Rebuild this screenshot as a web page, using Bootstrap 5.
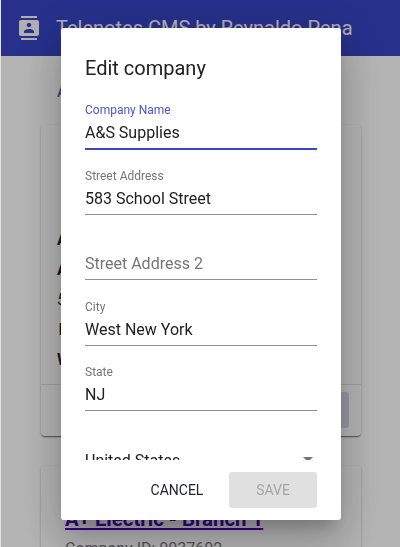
<!DOCTYPE html>
<html lang="en">
<head>
<meta charset="utf-8">
<meta name="viewport" content="width=device-width, initial-scale=1">
<title>Telenotes CMS</title>
<link href="https://cdn.jsdelivr.net/npm/bootstrap@5.3.0/dist/css/bootstrap.min.css" rel="stylesheet">
<style>
  html, body { height: 100%; }
  body { font-family: Roboto, sans-serif; color: #212121; background: #e2e2e2; line-height: 1.5; }
  .app-shell { margin-left: 1px; height: 547px; background: #fafafa; }
  .app-bar { height: 56px; padding: 0 16px; background: #3643c0; color: #f4f4f4; gap: 15px; }
  .app-title { font-size: 20px; line-height: 32px; }
  .app-main { padding: 0 39px 0 40px; }
  .crumb { height: 69px; padding: 24px 0 0 16px; color: #3643c0; }
  .company-card { border-radius: 4px; background: #fafafa;
    box-shadow: 0 2px 1px -1px rgba(0,0,0,.3), 0 1px 1px rgba(0,0,0,.2), 0 1px 3px rgba(0,0,0,.2); }
  .card-main { height: 311px; }
  .company-info { padding: 100px 0 0 16px; line-height: 30px; height: 259px; }
  .info-code { padding-left: 1.500px; }
  .card-foot { height: 52px; border-top: 1px solid #dedede; padding: 7px 12px; }
  .ghost-btn { width: 88px; height: 36px; background: #d3d4e8; border-radius: 3px; }
  .card-next { margin-top: 30px; padding: 38px 24px 0; height: 120px; }
  .next-name { font-size: 20.400px; line-height: 30px; color: #4b00c4; text-decoration-thickness: 2px; }
  .next-id { color: #777; line-height: 30px; }
  .modal-backdrop.dim { left: 1px; width: 399px; height: 547px; opacity: .28; }
  .edit-dialog { width: 280px; margin: 28px 0 0 61px; }
  .edit-content { height: 492px; border: 0; border-radius: 3px; color: #212121;
    box-shadow: 0 11px 15px -7px rgba(0,0,0,.2), 0 24px 38px 3px rgba(0,0,0,.14), 0 9px 46px 8px rgba(0,0,0,.12); }
  .edit-title { font-size: 20px; line-height: 32px; }
  .edit-header { padding: 24px 24px 0; height: 66px; border: 0; }
  .edit-body { height: 366px; padding: 0 24px; overflow: hidden; flex: none; }
  .field { height: 65px; padding-top: 8px; }
  .field-tall { height: 66px; padding-top: 9px; }
  .field-box { height: 48px; border-bottom: 1px solid #8e8e8e; }
  .field-box label { font-size: 12px; line-height: 18px; color: #757575; height: 18px; }
  .field-box input { border: 0; outline: 0; padding: 0; background: none; color: #212121; font-size: 16px; height: 26px; }
  .field-box input::placeholder { color: #757575; opacity: 1; }
  .field-active .field-box { border-bottom: 2px solid #3748bc; }
  .field-active label { color: #4655cc; line-height: 16px; height: 17px; }
  .field-country { padding-top: 11px; }
  .edit-footer { height: 60px; padding: 12px 24px; border: 0; gap: 9.600px; }
  .act { height: 36px; padding: 0 16px; font-size: 14px; border: 0; border-radius: 3px; }
  .act-save { width: 88px; background: #e0e0e0; color: #a6a6a6; }
</style>
<script src="https://cdn.jsdelivr.net/npm/bootstrap@5.3.0/dist/js/bootstrap.bundle.min.js"></script>
</head>
<body class="overflow-hidden">
<div class="app-shell overflow-hidden">
  <header class="app-bar d-flex align-items-center">
    <svg width="24" height="24" viewBox="0 0 24 24" fill="currentColor"><path d="M20 0H4v2h16V0zM4 24h16v-2H4v2zM20 4H4c-1.1 0-2 .9-2 2v12c0 1.1.9 2 2 2h16c1.1 0 2-.9 2-2V6c0-1.100-.9-2-2-2zm-8 2.750c1.240 0 2.250 1.010 2.250 2.250s-1.010 2.250-2.250 2.250S9.750 10.240 9.750 9 10.760 6.750 12 6.750zM17 17H7v-1.500c0-1.670 3.330-2.500 5-2.500s5 .83 5 2.500V17z"/></svg>
    <div class="app-title text-nowrap">Telenotes CMS by Reynaldo Pena</div>
  </header>
  <main class="app-main">
    <div class="crumb">Add</div>
    <section class="company-card card-main">
      <div class="company-info">
        <div class="fw-bold">A</div>
        <div class="fw-bold">A</div>
        <div class="fst-italic">5</div>
        <div class="fw-bold info-code">I</div>
        <div class="fw-bold">W</div>
      </div>
      <div class="card-foot d-flex justify-content-end"><div class="ghost-btn"></div></div>
    </section>
    <section class="company-card card-next">
      <div class="next-name fw-bold text-decoration-underline text-nowrap">A+ Electric - Branch 1</div>
      <div class="next-id">Company ID: 0037602</div>
    </section>
  </main>
</div>
<div class="modal-backdrop dim"></div>
<div class="modal d-block overflow-hidden" tabindex="-1">
  <div class="modal-dialog edit-dialog">
    <div class="modal-content edit-content">
      <div class="modal-header edit-header align-items-start"><div class="edit-title">Edit company</div></div>
      <div class="modal-body edit-body">
        <div class="field field-active"><div class="field-box d-flex flex-column"><label>Company Name</label><input class="w-100" value="A&amp;S Supplies"></div></div>
        <div class="field"><div class="field-box d-flex flex-column"><label>Street Address</label><input class="w-100" value="583 School Street"></div></div>
        <div class="field"><div class="field-box d-flex flex-column"><label></label><input class="w-100" placeholder="Street Address 2"></div></div>
        <div class="field field-tall"><div class="field-box d-flex flex-column"><label>City</label><input class="w-100" value="West New York"></div></div>
        <div class="field"><div class="field-box d-flex flex-column"><label>State</label><input class="w-100" value="NJ"></div></div>
        <div class="field field-country"><div class="field-box d-flex flex-column"><label></label>
          <div class="d-flex justify-content-between align-items-start pe-1"><span>United States</span>
          <svg class="mt-2" width="10" height="5" viewBox="0 0 10 5"><path d="M0 0h10L5 5z" fill="#757575"/></svg></div></div></div>
      </div>
      <div class="modal-footer edit-footer flex-nowrap">
        <button class="btn act m-0">CANCEL</button>
        <button class="btn act act-save m-0">SAVE</button>
      </div>
    </div>
  </div>
</div>
</body>
</html>
